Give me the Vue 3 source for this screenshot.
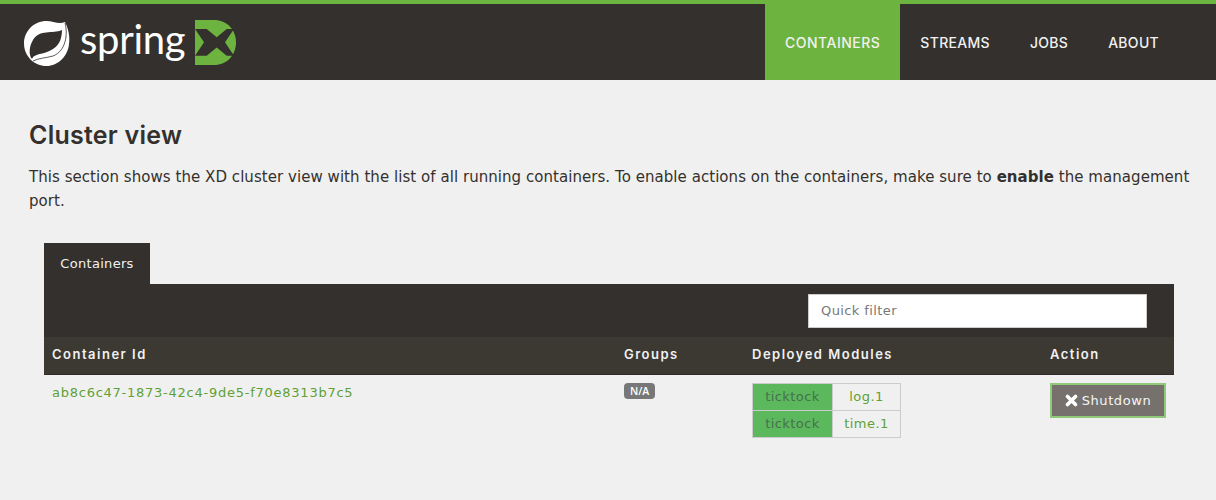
<script setup>
const navItems = [
  { label: 'CONTAINERS', active: true },
  { label: 'STREAMS' },
  { label: 'JOBS' },
  { label: 'ABOUT' }
]
const modules = [
  { group: 'ticktock', name: 'log.1' },
  { group: 'ticktock', name: 'time.1' }
]
</script>

<template>
  <div class="page">
    <header class="header">
      <div class="logo">
        <svg class="leaf" width="46" height="46" viewBox="0 0 46 46">
          <path fill="#fff" d="M41 2C45 10 46 18 45 24C44 36 34 46 22.500 46C10 46 0 36 0 23.500C0 11 10 1 22.500 1C29 1 35 5 41 2Z" />
          <path fill="#34302d" d="M38 10C28 14 16 9 9 20C5 27 5 33 7 38C8 39 9 38 9 37C14 33 22 34 29 29C36 25 38 17 38 10Z" />
          <path fill="none" stroke="#34302d" stroke-width="0.8" d="M41 3C44 14 42 31 29 36C22 38 15 38 9 41" />
        </svg>
        <span class="wordmark">spring</span>
        <svg class="xd" width="41" height="45" viewBox="0 0 41 45">
          <path fill="#6db33f" d="M0 0H19C32 0 41 10 41 22.500C41 35 32 45 19 45H0Z" />
          <path fill="#34302d" d="M0 9H11.700L21.700 17.300L31.700 9H39L30 22.300L39 35.700H31.700L21.700 27.500L11.700 35.700H0L9 22.300Z" />
        </svg>
      </div>
      <nav class="nav">
        <a v-for="item in navItems" :key="item.label" class="nav-item" :class="{ active: item.active }">{{ item.label }}</a>
      </nav>
    </header>

    <main class="main">
      <h1 class="title">Cluster view</h1>
      <p class="intro">This section shows the XD cluster view with the list of all running containers. To enable actions on the containers, make sure to <b>enable</b> the management port.</p>

      <section class="panel">
        <div class="tab">Containers</div>
        <div class="filter-bar">
          <input class="filter" type="text" placeholder="Quick filter" />
        </div>
        <div class="row head">
          <div class="c1">Container Id</div>
          <div class="c2">Groups</div>
          <div class="c3">Deployed Modules</div>
          <div class="c4">Action</div>
        </div>
        <div class="row body">
          <div class="c1"><a class="cid">ab8c6c47-1873-42c4-9de5-f70e8313b7c5</a></div>
          <div class="c2"><span class="badge">N/A</span></div>
          <div class="c3">
            <div class="modules">
              <template v-for="(m, i) in modules" :key="i">
                <div class="mod-group">{{ m.group }}</div>
                <div class="mod-name">{{ m.name }}</div>
              </template>
            </div>
          </div>
          <div class="c4">
            <button class="shutdown">
              <svg class="x" width="13" height="13" viewBox="0 0 13 13"><path fill="none" stroke="#fff" stroke-width="3.600" stroke-linecap="round" d="M2.500 2.500L10.500 10.500M10.500 2.500L2.500 10.500" /></svg>
              <span>Shutdown</span>
            </button>
          </div>
        </div>
      </section>
    </main>
  </div>
</template>

<style>
html, body { margin: 0; background: #f0f0f0; }
</style>

<style scoped>
.page { width: 1216px; height: 500px; overflow: hidden; background: #f0f0f0; font-family: "DejaVu Sans", sans-serif; color: #34302d; }
.header { height: 76px; border-top: 4px solid #6db33f; background: #34302d; display: flex; justify-content: space-between; }
.logo { display: flex; align-items: center; padding-left: 24px; }
.leaf { display: block; margin-top: 1px; }
.wordmark { font-family: Lato, sans-serif; font-size: 40px; font-weight: 400; color: #fff; margin-left: 10px; line-height: 1; position: relative; top: -3px; letter-spacing: -0.3px; }
.xd { margin-left: 10px; margin-top: 1px; }
.nav { display: flex; margin-right: 37px; }
.nav-item { display: flex; align-items: center; padding: 0 20px; font-family: Inter, sans-serif; font-weight: 500; font-size: 14px; letter-spacing: 0.3px; color: #f1f1f1; }
.nav-item.active { background: #6db33f; letter-spacing: 0.5px; }
.main { padding: 0 22px 0 29px; }
.title { margin: 0; padding-top: 41px; font-family: Inter, sans-serif; font-weight: 600; font-size: 25px; letter-spacing: 0.25px; line-height: 28px; }
.intro { margin: 16px 0 0; font-size: 15px; line-height: 24px; letter-spacing: 0.05px; }
.panel { margin: 30px 20px 0 15px; }
.tab { width: 106px; height: 41px; background: #34302d; color: #f1f1f1; font-size: 13px; letter-spacing: 0.3px; display: flex; align-items: center; justify-content: center; }
.filter-bar { height: 53px; background: #34302d; display: flex; align-items: flex-start; justify-content: flex-end; padding: 10px 27px 0 0; box-sizing: border-box; }
.filter { width: 339px; height: 34px; box-sizing: border-box; border: 1px solid #ccc; padding: 0 12px 2px; background: #fff; font: 13px "DejaVu Sans", sans-serif; letter-spacing: 0.4px; }
.filter::placeholder { color: #777; opacity: 1; }
.row { display: flex; }
.head { height: 38px; padding-bottom: 3px; background: #3c3832; border-bottom: 1px solid #2e2a27; box-sizing: border-box; align-items: center; color: #f1f1f1; font-family: Inter, sans-serif; font-weight: 600; font-size: 13px; letter-spacing: 1.5px; }
.c1 { width: 580px; padding-left: 8px; box-sizing: border-box; }
.c2 { width: 128px; display: flex; align-items: flex-start; }
.c3 { width: 298px; }
.c4 { flex: 1; }
.body { padding-top: 8px; font-size: 13px; }
.body .c1 { padding-top: 2px; }
.cid { color: #5fa134; letter-spacing: 0.75px; }
.badge { background: #777; color: #fff; font-weight: 600; font-family: "Open Sans", sans-serif; font-size: 10.500px; line-height: 16px; padding: 0 6px; border-radius: 4px; }
.modules { display: grid; grid-template-columns: 80px 67px; width: 149px; border: 1px solid #ccc; box-sizing: border-box; gap: 1px 0; background: #ccc; letter-spacing: 0.45px; }
.mod-group { background: #5cb85c; color: #47704f; height: 26px; padding-bottom: 2px; box-sizing: border-box; display: flex; align-items: center; justify-content: center; border-right: 1px solid #ccc; }
.mod-name { background: #f0f0f0; color: #5fa134; height: 26px; padding-bottom: 2px; box-sizing: border-box; display: flex; align-items: center; justify-content: center; }
.shutdown { width: 116px; height: 35px; background: #77716d; border: 2px solid #8fc97a; color: #f4f4f4; font: 13px "DejaVu Sans", sans-serif; letter-spacing: 0.6px; padding: 0; display: flex; align-items: center; justify-content: center; gap: 4px; }
.x { display: block; }
</style>
